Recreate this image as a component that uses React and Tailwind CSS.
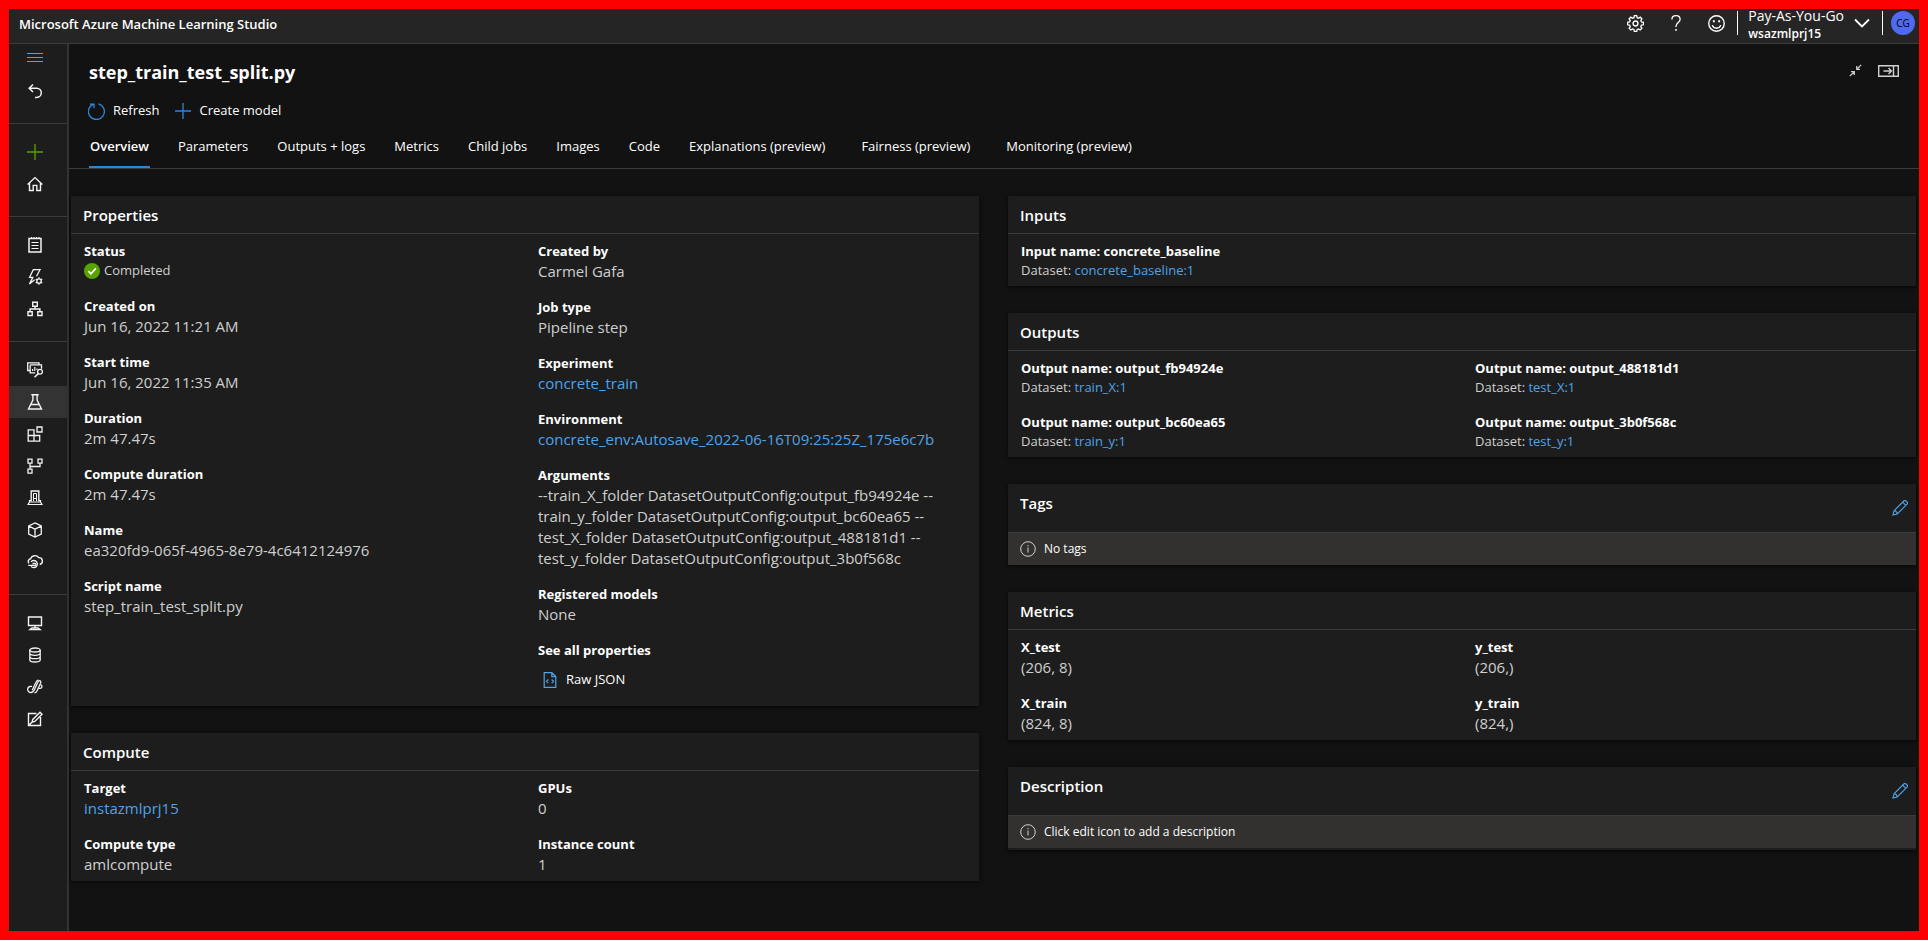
import React from "react";

const Svg = ({ children, size = "size-4", sw = 1.1, box = "0 0 16 16" }) => (
  <svg viewBox={box} className={`${size} shrink-0`} fill="none" stroke="currentColor" strokeWidth={sw} aria-hidden="true">
    {children}
  </svg>
);

const icons = {
  menu: <path d="M0 3.500h16M0 7.500h16M0 11.500h16" strokeWidth="1" />,
  undo: <path d="M6 1.500 2.200 5.200 6 9M2.500 5.200h7.200a4.600 4.600 0 0 1 0 9.200H8" strokeWidth="1.500" />,
  plus: <path d="M8 0v16M0 8h16" strokeWidth="1.300" />,
  home: <path d="M.6 8.400 8 1.600l7.400 6.800M2.500 7v7.500h3.700V9.400h3.600v5.100h3.700V7" strokeWidth="1.400" />,
  notebook: (
    <>
      <path d="M2 1.500h12v13.500H2z" strokeWidth="1.500" />
      <path d="M4.500 0v2M7 0v2M9.500 0v2M12 0v2M4.500 5.500h7M4.500 8.500h7M4.500 11.500h7" strokeWidth="1.200" />
    </>
  ),
  automl: (
    <>
      <path d="M9.500 7.200 13 .7H6.300L2.600 8.300h3.200L2.400 15l5.200-4.300" strokeWidth="1.300" />
      <circle cx="12" cy="12" r="2.200" strokeWidth="1.300" />
      <path d="M12 8.300v1.500M12 14.200v1.500M8.800 10.100l1.300.8M13.900 13.100l1.300.8M15.200 10.100l-1.300.8M10.100 13.100l-1.300.8" strokeWidth="1.300" />
    </>
  ),
  designer: <path d="M5.700 1.200h4.600v4H5.700zM1 10.800h4.200v3.700H1zM10.800 10.800H15v3.700h-4.200zM8 5.200v2.800M3.100 10.800V8h9.800v2.800" strokeWidth="1.400" />,
  data: (
    <>
      <path d="M12 2.500V.8H.7v7.700h2M3.200 2.900h11.300v3.800M3.200 2.900v8h5" strokeWidth="1.300" />
      <path d="M5.600 9V7M7.800 9V5M10 8V6.500" strokeWidth="1.200" />
      <circle cx="13" cy="9.700" r="2.400" strokeWidth="1.300" />
      <path d="m11.300 11.600-3.800 3.700" strokeWidth="1.500" />
    </>
  ),
  flask: <path d="M4.300.7h7.400M5.900.7v5.400L1.500 15h13l-4.400-8.900V.7M3.900 10.500h8.200" strokeWidth="1.400" />,
  components: <path d="M1.200 3.800H7v5.700h5.700v5.700H1.200zM1.200 9.500H7v5.700M10 1h5v5h-5z" strokeWidth="1.300" />,
  pipelines: <path d="M1 1.200h4v4H1zM11 1.200h4v4h-4zM1 11.200h4v4H1zM3 5.200v6M13 5.200v3.300H3" strokeWidth="1.300" />,
  environments: (
    <>
      <path d="M4.200 11.500V1h7.600v10.500" strokeWidth="1.400" />
      <path d="M6.500 11V3.500h3V11M6.500 8.500h3" strokeWidth="1" />
      <path d="M4.200 10.500H2.500v1.500L1 14.500h14L13.500 12v-1.500h-1.700M2.500 12h11" strokeWidth="1.200" />
    </>
  ),
  models: <path d="M8 .9 14.300 4v8L8 15.100 1.700 12V4zM1.700 4 8 7.200 14.300 4M8 7.200v7.900" strokeWidth="1.300" />,
  endpoints: (
    <>
      <path d="M2 9.300A2.700 2.700 0 0 1 3.600 4.800 4.600 4.600 0 0 1 11.700 3.600a3.500 3.500 0 0 1 1 6.900" strokeWidth="1.400" />
      <path d="M4 7.800A3.600 3.600 0 1 1 4 12.400" strokeWidth="1.300" />
      <path d="M5.500 9.500h2.300a1.200 1.200 0 1 1-1 1.900H1.200" strokeWidth="1.300" />
    </>
  ),
  compute: <path d="M1.500 2h13v8.500h-13zM8 10.500V13M3 14.600h10l-2-1.600H5z" strokeWidth="1.400" />,
  datastore: (
    <>
      <ellipse cx="8" cy="3" rx="5.200" ry="2" strokeWidth="1.300" />
      <path d="M2.800 3v10c0 1.200 2.300 2 5.200 2s5.200-.8 5.200-2V3M2.800 6.300c0 1.200 2.300 2 5.200 2s5.200-.8 5.200-2M2.800 9.700c0 1.200 2.300 2 5.200 2s5.200-.8 5.200-2" strokeWidth="1.300" />
    </>
  ),
  link: (
    <>
      <path d="M5 7.300H3.700a3.100 3.100 0 1 0 .2 6.200c2 0 2.800-1.300 3.600-3.100l3.200-7c.6-1.400 1.600-2 2.400-1.600s.9 1.400.3 2.700l-3.300 7.200c-.7 1.500-1.500 2.300-2.600 2" strokeWidth="1.300" />
      <path d="M5.200 11.200 8.600 4c.7-1.600 1.600-2.800 2.900-3.200M11.200 9.300h2.100a1.700 1.700 0 0 0 0-3.400" strokeWidth="1.300" />
    </>
  ),
  labeling: <path d="M13.500 6v8.500h-12v-12h8M5 11.200l.8-2.800L13 1.300l2 1.900-7.200 7.200zM1.500 14.500 5 11.200" strokeWidth="1.400" />,
  pencil: (
    <>
      <path d="m.9 15.100 1.100-4.300L11.800 1a1.600 1.600 0 0 1 2.200 0l1 1a1.600 1.600 0 0 1 0 2.200L5.200 14z" />
      <path d="m10.600 2.200 3.200 3.200M2 10.800c1.900.1 3 1.300 3.200 3.200" />
    </>
  ),
  info: (
    <>
      <circle cx="8" cy="8" r="7.300" strokeWidth="1" />
      <path d="M8 6.500v5M8 4v1.300" strokeWidth="1" />
    </>
  ),
  refresh: <path d="M5.300 1A7.500 7.500 0 1 0 9.900.8M1.700 1h4v4" strokeWidth="1.200" />,
  json: <path d="M2.200.6h7.600l4 4v10.800H2.200zM9.800.6v4h4M6.300 7.500 4.500 9.300l1.800 1.800M9.700 7.500l1.800 1.800-1.800 1.800" strokeWidth="1.200" />,
  smile: (
    <>
      <circle cx="8" cy="8" r="7.300" strokeWidth="1.300" />
      <path d="M4 9.500a4.200 4.200 0 0 0 8 0" strokeWidth="1.300" />
      <path d="M5.500 5v1.800M10.500 5v1.800" strokeWidth="1.800" />
    </>
  ),
  help: (
    <>
      <path d="M3.900 4.400C3.900 2.200 5.600.7 8 .7s4.100 1.500 4.100 3.700C12.100 7.600 8 7.700 8 11.500V12" strokeWidth="1.300" />
      <path d="M8 14v1.700" strokeWidth="1.600" />
    </>
  ),
  gear: (
    <>
      <path d="M6.800.7h2.400l.4 2 1.400.6 1.700-1.100 1.700 1.700-1.100 1.700.6 1.400 2 .4v2.400l-2 .4-.6 1.400 1.100 1.700-1.700 1.700-1.700-1.100-1.400.6-.4 2H6.800l-.4-2-1.400-.6-1.700 1.100-1.700-1.700 1.100-1.700-.6-1.400-2-.4V7.400l2-.4.6-1.400-1.100-1.700 1.700-1.700L5 3.300l1.400-.6z" strokeWidth="1.300" transform="translate(0.500 0) scale(.94)" />
      <circle cx="8" cy="8" r="2.300" strokeWidth="1.300" />
    </>
  ),
  chevron: <path d="m1 4.500 7 7 7-7" strokeWidth="1.800" />,
  collapse: <path d="M15 1 9.500 6.500M9.500 2.500v4h4M1 15l5.500-5.500M2.500 9.500h4v4" strokeWidth="1.500" />,
};

const navGroups = [
  [["plus", "New"], ["home", "Home"]],
  [["notebook", "Notebooks"], ["automl", "Automated ML"], ["designer", "Designer"]],
  [["data", "Data"], ["flask", "Jobs"], ["components", "Components"], ["pipelines", "Pipelines"], ["environments", "Environments"], ["models", "Models"], ["endpoints", "Endpoints"]],
  [["compute", "Compute"], ["datastore", "Datastores"], ["link", "Linked services"], ["labeling", "Data labeling"]],
];

const tabs = ["Overview", "Parameters", "Outputs + logs", "Metrics", "Child jobs", "Images", "Code", "Explanations (preview)", "Fairness (preview)", "Monitoring (preview)"];

function NavButton({ icon, label }) {
  const active = icon === "flask";
  return (
    <button type="button" aria-label={label} className={`flex h-8 w-full items-center pl-[18px] ${active ? "bg-[#333333]" : ""} ${icon === "plus" ? "text-[#57a300]" : "text-[#f3f3f3]"}`}>
      <Svg>{icons[icon]}</Svg>
    </button>
  );
}

const A = ({ children }) => (
  <a href="#" className="text-[#4da3e8]">{children}</a>
);

function Card({ title, edit, children, className = "" }) {
  return (
    <section className={`bg-[#1d1d1d] shadow-[0_1px_4px_rgba(0,0,0,0.7)] ${className}`}>
      <header className={`flex items-start justify-between border-b border-[#3b3b3b] pl-3 ${edit ? "h-[49px]" : ""}`}>
        <h2 className="pt-[9px] pb-[7px] text-[15px] leading-[21px] font-semibold text-white">{title}</h2>
        {edit && (
          <button type="button" aria-label={`Edit ${title}`} className="flex h-12 items-center pr-2 text-[#4da3e8]">
            <Svg>{icons.pencil}</Svg>
          </button>
        )}
      </header>
      {children}
    </section>
  );
}

function Item({ label, small, children }) {
  return (
    <div>
      <dt className="text-[13px] leading-5 font-bold text-white">{label}</dt>
      <dd className={small ? "text-[13px] leading-[19px]" : "text-[15px] leading-[21px]"}>{children}</dd>
    </div>
  );
}

const Column = ({ children }) => <dl className="flex min-w-0 flex-col gap-[15px] pr-3 pl-[13px]">{children}</dl>;
const Body = ({ children }) => <div className="grid grid-cols-2 pt-[7px] pb-1.5">{children}</div>;

const Notice = ({ children }) => (
  <p className="flex h-8 items-center gap-2 bg-[#323130] pl-3 text-xs text-white">
    <span className="text-[#d2d0ce]"><Svg>{icons.info}</Svg></span>
    {children}
  </p>
);

export default function App() {
  return (
    <div className="bg-white pb-px font-['Open_Sans','Noto_Sans',sans-serif]">
      <div className="flex min-h-[calc(100vh-1px)] flex-col border-9 border-[#ff0000] bg-[#121212] text-[#cfcfcf]">
        <header className="flex h-[35px] items-center justify-between border-b border-[#3b3b3b] bg-[#252525] pr-1 pl-2.5 text-white">
          <span className="pb-0.5 text-[13px] font-semibold">Microsoft Azure Machine Learning Studio</span>
          <div className="flex items-center pb-1.5">
            <div className="flex gap-6 pr-3">
              <button type="button" aria-label="Settings"><Svg size="size-[17px]">{icons.gear}</Svg></button>
              <button type="button" aria-label="Help"><Svg size="size-4">{icons.help}</Svg></button>
              <button type="button" aria-label="Feedback"><Svg size="size-[17px]">{icons.smile}</Svg></button>
            </div>
            <button type="button" className="flex h-6 items-center border-l border-white pl-2.5 text-left">
              <span className="mt-1 block">
                <span className="block text-sm leading-[18px]">Pay-As-You-Go</span>
                <span className="block text-xs leading-[18px] font-semibold">wsazmlprj15</span>
              </span>
              <span className="pr-3 pl-2.5"><Svg>{icons.chevron}</Svg></span>
            </button>
            <span className="flex h-6 items-center border-l border-white pl-2">
              <span className="flex size-6 items-center justify-center rounded-full bg-[#4f6bed] text-[10px] text-black">CG</span>
            </span>
          </div>
        </header>

        <div className="flex grow">
          <nav className="w-[60px] shrink-0 border-r-2 border-[#333333] bg-[#1d1d1d]">
            <div className="border-b border-[#3b3b3b] pb-4">
              <button type="button" aria-label="Menu" className="mb-[3px] flex h-7 w-full items-center pl-[18px] text-[#4da3e8]"><Svg>{icons.menu}</Svg></button>
              <NavButton icon="undo" label="Back" />
            </div>
            {navGroups.map((group, i) => (
              <div key={i} className={`pt-3 ${i < 3 ? "border-b border-[#3b3b3b] pb-4" : ""}`}>
                {group.map(([icon, label]) => <NavButton key={icon} icon={icon} label={label} />)}
              </div>
            ))}
          </nav>

          <main className="min-w-0 grow">
            <div className="flex items-start justify-between pt-3.5 pr-5 pl-5">
              <h1 className="text-lg leading-7 font-bold text-white">step_train_test_split.py</h1>
              <div className="flex items-center gap-4 pt-1.5 text-[#d0d0d0]">
                <button type="button" aria-label="Exit full width"><Svg size="size-[13px]">{icons.collapse}</Svg></button>
                <button type="button" aria-label="Open side panel">
                  <Svg size="h-3 w-[21px]" box="0 0 21 12">
                    <path d="M.7.7h19.600v10.600H.7zM15.500.7v10.600" strokeWidth="1.400" />
                    <path d="M5.500 6h8M10.500 3l3 3-3 3" strokeWidth="1.400" />
                  </Svg>
                </button>
              </div>
            </div>
            <div className="mt-[9px] flex h-8 items-center gap-4 pl-[19px] text-[13px] text-white">
              <button type="button" className="flex items-center gap-2"><span className="text-[#2b88d8]"><Svg size="size-[17px]">{icons.refresh}</Svg></span>Refresh</button>
              <button type="button" className="flex items-center gap-2"><span className="text-[#2b88d8]"><Svg>{icons.plus}</Svg></span>Create model</button>
            </div>
            <div role="tablist" className="flex h-[42px] gap-[27px] border-b border-[#3b3b3b] pl-5 text-[13px] text-white">
              {tabs.map((t, i) => (
                <button key={t} type="button" role="tab" aria-selected={i === 0} className={`border-b-2 px-px ${i === 0 ? "border-[#2b88d8] font-semibold" : "border-transparent"} ${i > 6 ? "pr-2" : ""}`}>{t}</button>
              ))}
            </div>

            <div className="grid grid-cols-2 items-start gap-[29px] pt-[27px] pr-[3px] pb-12 pl-0.5">
              <div className="flex flex-col gap-[27px]">
                <Card title="Properties">
                  <Body>
                    <Column>
                      <div>
                        <dt className="text-[13px] leading-5 font-bold text-white">Status</dt>
                        <dd className="flex h-5 items-center gap-1 text-[13px]">
                          <svg viewBox="0 0 16 16" className="size-4" aria-hidden="true">
                            <circle cx="8" cy="8" r="8" fill="#57a300" />
                            <path d="m4.300 8.200 2.600 2.600 4.900-5.400" fill="none" stroke="white" strokeWidth="1.800" />
                          </svg>
                          Completed
                        </dd>
                      </div>
                      <Item label="Created on">Jun 16, 2022 11:21 AM</Item>
                      <Item label="Start time">Jun 16, 2022 11:35 AM</Item>
                      <Item label="Duration">2m 47.47s</Item>
                      <Item label="Compute duration">2m 47.47s</Item>
                      <Item label="Name">ea320fd9-065f-4965-8e79-4c6412124976</Item>
                      <Item label="Script name">step_train_test_split.py</Item>
                    </Column>
                    <Column>
                      <Item label="Created by">Carmel Gafa</Item>
                      <Item label="Job type">Pipeline step</Item>
                      <Item label="Experiment"><A>concrete_train</A></Item>
                      <Item label="Environment"><A>concrete_env:Autosave_2022-06-16T09:25:25Z_175e6c7b</A></Item>
                      <Item label="Arguments">--train_X_folder DatasetOutputConfig:output_fb94924e --train_y_folder DatasetOutputConfig:output_bc60ea65 --test_X_folder DatasetOutputConfig:output_488181d1 --test_y_folder DatasetOutputConfig:output_3b0f568c</Item>
                      <Item label="Registered models">None</Item>
                      <div>
                        <dt className="text-[13px] leading-5 font-bold text-white">See all properties</dt>
                        <dd>
                          <button type="button" className="flex h-10 items-center gap-2 pl-1 text-[13px] text-white">
                            <span className="text-[#4da3e8]"><Svg>{icons.json}</Svg></span>Raw JSON
                          </button>
                        </dd>
                      </div>
                    </Column>
                  </Body>
                </Card>
                <Card title="Compute">
                  <Body>
                    <Column>
                      <Item label="Target"><A>instazmlprj15</A></Item>
                      <Item label="Compute type">amlcompute</Item>
                    </Column>
                    <Column>
                      <Item label="GPUs">0</Item>
                      <Item label="Instance count">1</Item>
                    </Column>
                  </Body>
                </Card>
              </div>

              <div className="flex flex-col gap-[27px]">
                <Card title="Inputs">
                  <Body>
                    <Column>
                      <Item small label="Input name: concrete_baseline">Dataset: <A>concrete_baseline:1</A></Item>
                    </Column>
                  </Body>
                </Card>
                <Card title="Outputs">
                  <Body>
                    <Column>
                      <Item small label="Output name: output_fb94924e">Dataset: <A>train_X:1</A></Item>
                      <Item small label="Output name: output_bc60ea65">Dataset: <A>train_y:1</A></Item>
                    </Column>
                    <Column>
                      <Item small label="Output name: output_488181d1">Dataset: <A>test_X:1</A></Item>
                      <Item small label="Output name: output_3b0f568c">Dataset: <A>test_y:1</A></Item>
                    </Column>
                  </Body>
                </Card>
                <Card title="Tags" edit><Notice>No tags</Notice></Card>
                <Card title="Metrics">
                  <Body>
                    <Column>
                      <Item label="X_test">(206, 8)</Item>
                      <Item label="X_train">(824, 8)</Item>
                    </Column>
                    <Column>
                      <Item label="y_test">(206,)</Item>
                      <Item label="y_train">(824,)</Item>
                    </Column>
                  </Body>
                </Card>
                <Card title="Description" edit className="pb-0.5"><Notice>Click edit icon to add a description</Notice></Card>
              </div>
            </div>
          </main>
        </div>
      </div>
    </div>
  );
}
